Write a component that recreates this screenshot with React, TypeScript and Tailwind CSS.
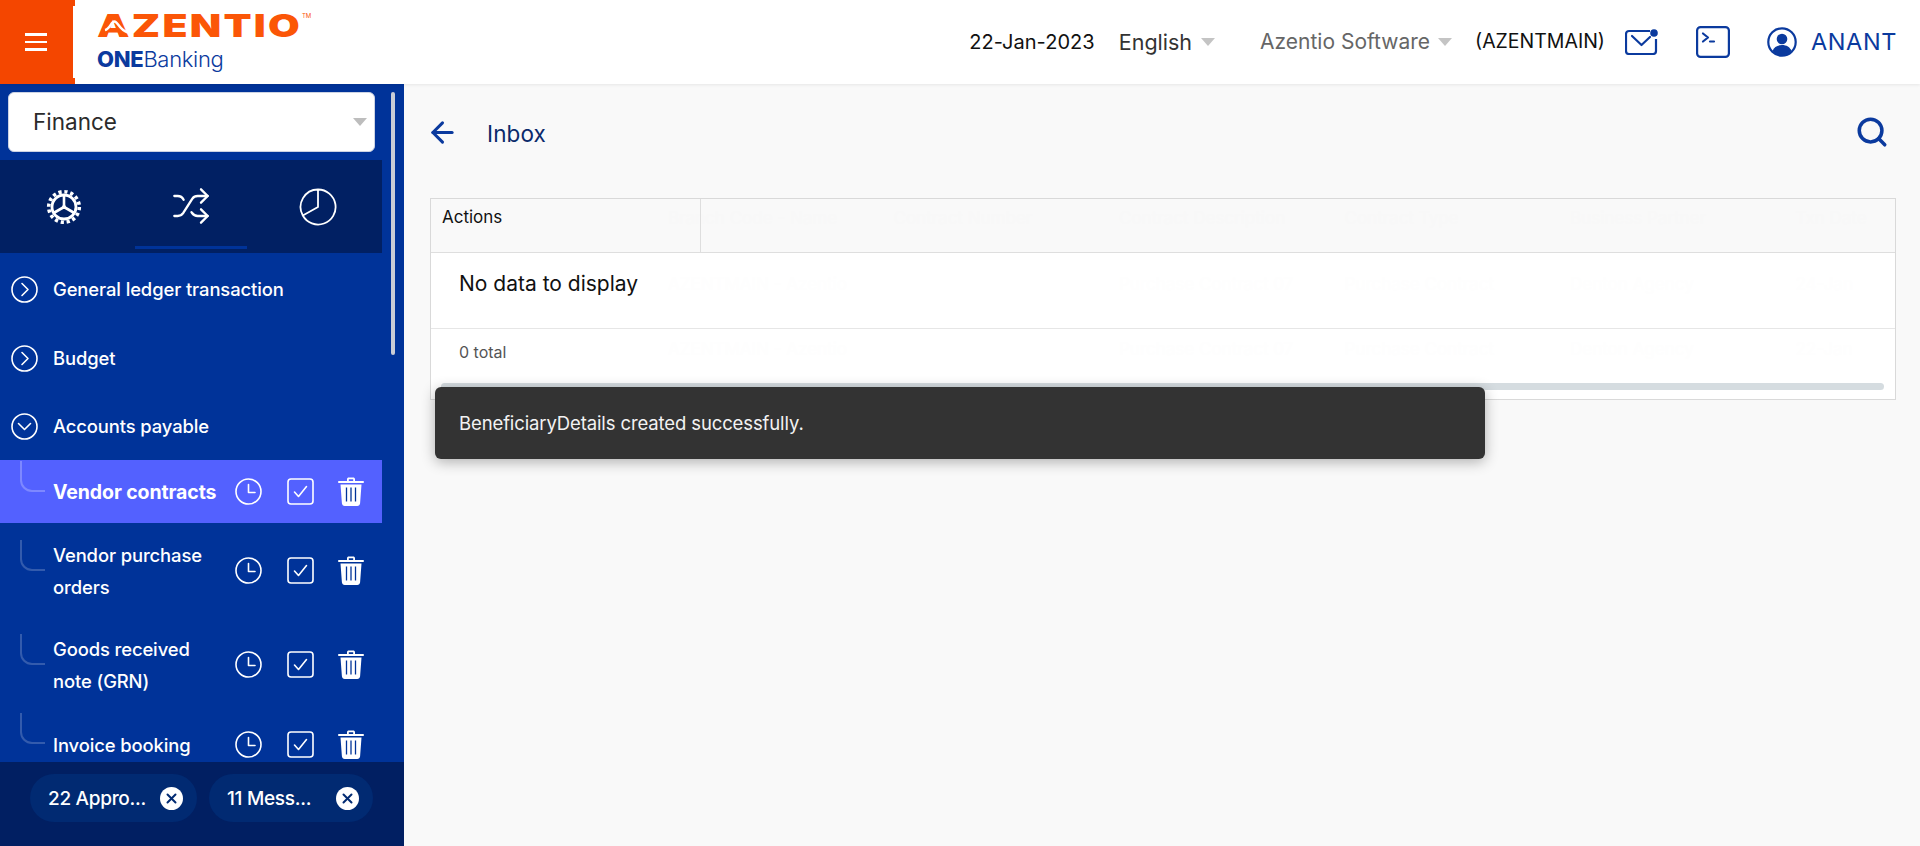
import React from "react";
import { ArrowLeft, Search, Shuffle } from "lucide-react";

function Caret({ className }: { className: string }) {
  return (
    <svg width="14" height="8" viewBox="0 0 14 8" className={className}>
      <path d="M0 0h14L7 8z" fill="currentColor" />
    </svg>
  );
}

function ChevronCircle({ open }: { open?: boolean }) {
  return (
    <svg width="27" height="27" viewBox="0 0 27 27" fill="none" stroke="white" strokeWidth="1.6" className="shrink-0">
      <circle cx="13.5" cy="13.5" r="12.5" />
      <path d={open ? "M7.5 10.5l6 6 6-6" : "M11 7.5l6 6-6 6"} strokeLinecap="round" strokeLinejoin="round" />
    </svg>
  );
}

function ClockIcon() {
  return (
    <svg width="27" height="27" viewBox="0 0 27 27" fill="none" stroke="white" strokeWidth="1.6">
      <circle cx="13.5" cy="13.5" r="12.5" />
      <path d="M13.5 6.5v8h6.5" strokeLinecap="round" strokeLinejoin="round" />
    </svg>
  );
}

function CheckIcon() {
  return (
    <svg width="27" height="27" viewBox="0 0 27 27" fill="none" stroke="white" strokeWidth="1.6">
      <rect x="1" y="1" width="25" height="25" rx="3" />
      <path d="M7.5 14l4 4.5 8-10" strokeLinecap="round" strokeLinejoin="round" />
    </svg>
  );
}

function TrashIcon() {
  return (
    <svg width="26" height="29" viewBox="0 0 26 29">
      <path d="M9 4V2.2C9 1.2 9.8.5 10.8.5h4.4c1 0 1.8.7 1.8 1.7V4h8c.5 0 1 .5 1 1s-.5 1-1 1H1C.5 6 0 5.500 0 5s.5-1 1-1h8zm1.800 0h4.400V2.300h-4.400V4z" fill="white" />
      <path d="M2.500 7.500h21l-1.400 18.700c-.1 1.500-1.300 2.800-2.800 2.800H6.700c-1.500 0-2.700-1.300-2.800-2.800L2.500 7.500z" fill="white" />
      <path d="M8.500 10.500v14M13 10.500v14M17.500 10.500v14" stroke="#003399" strokeWidth="1.300" fill="none" />
    </svg>
  );
}

function RowIcons() {
  return (
    <div className="ml-auto flex w-[147px] shrink-0 items-center justify-between pr-[18px]">
      <ClockIcon />
      <CheckIcon />
      <TrashIcon />
    </div>
  );
}

function Group({ label, open, h }: { label: string; open?: boolean; h: string }) {
  return (
    <div className={`flex items-center gap-[15px] pl-[11px] ${h}`}>
      <ChevronCircle open={open} />
      <span className="text-[18.400px] font-medium tracking-[-0.1px] text-white">{label}</span>
    </div>
  );
}

function SubItem({ lines, h, active }: { lines: string[]; h: string; active?: boolean }) {
  return (
    <div className={`relative flex items-center pl-[53px] ${h} ${active ? "bg-[#5361ff]" : ""}`}>
      <div className={`absolute left-[20px] top-1/2 h-[31px] w-[25px] -translate-y-full rounded-bl-[12px] border-b-2 border-l-2 ${active ? "border-white/25" : "border-white/20"}`} />
      <div className={`pt-[1px] leading-[32px] text-white ${active ? "text-[19.500px] font-bold tracking-[-0.1px]" : "text-[18.400px] font-medium tracking-[-0.1px]"}`}>
        {lines.map((l) => (
          <div key={l} className="whitespace-nowrap">{l}</div>
        ))}
      </div>
      <RowIcons />
    </div>
  );
}

function Pill({ text, w }: { text: string; w: string }) {
  return (
    <div className={`flex h-[48px] items-center justify-between rounded-full bg-[#012a72] pl-[18px] pr-[14px] ${w}`}>
      <span className="pt-[2px] text-[19px] font-medium tracking-[-0.3px] text-white">{text}</span>
      <svg width="23" height="23" viewBox="0 0 23 23">
        <circle cx="11.500" cy="11.500" r="11.500" fill="white" />
        <path d="M7.500 7.500l8 8M15.500 7.500l-8 8" stroke="#012a72" strokeWidth="2" strokeLinecap="round" />
      </svg>
    </div>
  );
}

function GhostCols({ cells, className }: { cells: string[]; className: string }) {
  return (
    <div className={`pointer-events-none absolute left-[237px] flex text-[17px] ${className}`}>
      {cells.map((c, i) => (
        <span key={i} className="w-[225.500px] whitespace-nowrap">{c}</span>
      ))}
    </div>
  );
}

function Header() {
  return (
    <header className="relative z-10 flex h-[84px] shrink-0 items-center bg-white pr-[23px] shadow-[0_1px_3px_rgba(0,0,0,0.08)]">
      <div className="relative flex h-full w-[75px] shrink-0 items-center justify-center bg-[#f44600] pr-[4px]">
        <div className="absolute right-0 top-[6px] h-[72px] w-[2px] bg-white" />
        <div className="flex w-[22px] flex-col gap-[5px]">
          <div className="h-[2.500px] bg-white" />
          <div className="h-[2.500px] bg-white" />
          <div className="h-[2.500px] bg-white" />
        </div>
      </div>
      <div className="ml-[22px] mt-[8px] flex flex-col self-start">
        <div className="relative flex h-[34px] items-center">
          <span className="origin-left scale-x-[1.32] text-[31px] font-black leading-none tracking-[1.700px] text-[#fb5607]">AZENTIO</span>
          <svg width="34" height="34" viewBox="0 0 34 34" fill="none" className="absolute left-0 top-0">
            <path d="M8 22C13 21 14 13.500 17.500 13.500S22 22 31 24.500" stroke="white" strokeWidth="2.400" />
          </svg>
          <span className="absolute left-[205px] top-[3px] text-[6px] text-[#fb5607]">TM</span>
        </div>
        <div className="mt-[4px] text-[22px] font-light leading-[26px] tracking-[-0.3px] text-[#0b3a9e]">
          <span className="font-extrabold">ONE</span>Banking
        </div>
      </div>
      <div className="ml-auto flex items-center">
        <span className="mr-[24px] text-[20px] tracking-[0.05px] text-[#111]">22-Jan-2023</span>
        <span className="mr-[9px] text-[21.500px] text-[#333]">English</span>
        <Caret className="mr-[45px] text-[#c4c4c4]" />
        <span className="mr-[8px] text-[21px] text-[#666]">Azentio Software</span>
        <Caret className="mr-[23px] text-[#c4c4c4]" />
        <span className="mr-[20px] text-[19.500px] text-[#111]">(AZENTMAIN)</span>
        <svg width="33" height="26" viewBox="0 0 33 26" fill="none" stroke="#0b3a9e" strokeWidth="2.200" className="mr-[38px]">
          <path d="M25 2H4a3 3 0 0 0-3 3v17a3 3 0 0 0 3 3h24a3 3 0 0 0 3-3V10" />
          <path d="M7 7l9.500 9L25 8" strokeLinecap="round" strokeLinejoin="round" />
          <circle cx="29" cy="4" r="3.800" fill="#0b3a9e" stroke="none" />
        </svg>
        <svg width="34" height="32" viewBox="0 0 34 32" fill="none" stroke="#0b3a9e" strokeWidth="2.200" className="mr-[37px]">
          <rect x="1.100" y="1.100" width="31.800" height="29.800" rx="3.500" />
          <path d="M7 7.500l5 4-5 4M14 15.500h4" strokeLinecap="round" strokeLinejoin="round" />
        </svg>
        <svg width="30" height="30" viewBox="0 0 30 30" className="mr-[14px]">
          <circle cx="15" cy="15" r="13.700" fill="none" stroke="#0b3a9e" strokeWidth="2.200" />
          <circle cx="15" cy="12" r="5.300" fill="#0b3a9e" />
          <path d="M5.500 24c1.500-4 5-6 9.500-6s8 2 9.500 6c-2.500 2.800-5.800 4.500-9.500 4.500S8 26.800 5.500 24z" fill="#0b3a9e" />
        </svg>
        <span className="text-[23.500px] tracking-[0.6px] text-[#0b3a9e]">ANANT</span>
      </div>
    </header>
  );
}

function Sidebar() {
  return (
    <aside className="relative flex h-full w-[404px] shrink-0 flex-col bg-[#003399]">
      <div className="absolute right-[9px] top-[8px] h-[263px] w-[4px] rounded-full bg-[#c9cdd6]" />
      <div className="px-[8px] pb-[8px] pr-[29px] pt-[8px]">
        <div className="flex h-[60px] items-center justify-between rounded-[6px] border border-[#ccd3e3] bg-white pl-[24px] pr-[7px]">
          <span className="text-[22.500px] text-[#2b2b2b]">Finance</span>
          <Caret className="text-[#bdbdbd]" />
        </div>
      </div>
      <div className="mr-[22px] flex h-[93px] shrink-0 items-start bg-[#012063] pl-[46px]">
        <div className="mt-[29px] w-[40px]">
          <svg width="36" height="36" viewBox="0 0 36 36" fill="none" stroke="white">
            <circle cx="18" cy="18" r="15.300" strokeWidth="3.600" strokeDasharray="3.200 2.800" />
            <circle cx="18" cy="18" r="12" strokeWidth="2.800" />
            <path d="M18 18V6M18 18L7.600 24M18 18l10.400 6" strokeWidth="2.600" />
            <circle cx="18" cy="18" r="2" fill="white" stroke="none" />
          </svg>
        </div>
        <div className="ml-[49px] flex h-full w-[112px] flex-col items-center">
          <Shuffle size={40} strokeWidth={1.400} className="mt-[26px] text-white" />
          <div className="mt-[20px] h-[3px] w-full bg-[#003399]" />
        </div>
        <svg width="38" height="38" viewBox="0 0 38 38" fill="none" stroke="white" strokeWidth="1.800" className="ml-[52px] mt-[28px]">
          <path d="M19 1.500A17.500 17.500 0 1 1 3.800 27.500L19 19V1.500zM3.800 27.500A17.500 17.500 0 0 1 19 1.500" strokeLinejoin="round" />
        </svg>
      </div>
      <div className="flex min-h-0 flex-1 flex-col overflow-hidden pr-[22px] pt-[2px]">
        <Group label="General ledger transaction" h="h-[69px] shrink-0" />
        <Group label="Budget" h="h-[69px] shrink-0" />
        <Group label="Accounts payable" open h="h-[67px] shrink-0" />
        <SubItem lines={["Vendor contracts"]} h="h-[63px] shrink-0" active />
        <SubItem lines={["Vendor purchase", "orders"]} h="h-[95px] shrink-0" />
        <SubItem lines={["Goods received", "note (GRN)"]} h="h-[93px] shrink-0" />
        <SubItem lines={["Invoice booking"]} h="h-[66px] shrink-0" />
      </div>
      <div className="flex h-[84px] shrink-0 items-start gap-[12px] bg-[#011f62] pl-[30px] pt-[12px]">
        <Pill text="22 Appro..." w="w-[167px]" />
        <Pill text="11 Mess..." w="w-[164px]" />
      </div>
    </aside>
  );
}

function Main() {
  return (
    <main className="relative min-w-0 flex-1 bg-[#f9f9f9] pl-[26px] pr-[24px]">
      <div className="flex h-[114px] items-start">
        <ArrowLeft size={33} strokeWidth={2.200} className="ml-[-4px] mt-[32px] text-[#0b3a9e]" />
        <span className="ml-[28px] mt-[33px] text-[22.500px] tracking-[0.1px] text-[#0b2a6b]">Inbox</span>
        <Search size={34} strokeWidth={2.500} className="ml-auto mr-[7px] mt-[31px] text-[#0b3a9e]" />
      </div>
      <div className="relative h-[202px] border border-[#d9d9d9] bg-white">
        <div className="relative flex h-[54px] border-b border-[#dedede] bg-[#f9f9f9]">
          <div className="z-[1] w-[270px] border-r border-[#dedede] pl-[11px] pt-[6px] text-[17px] text-[#111]">Actions</div>
          <GhostCols
            className="top-[7px] text-[#f8f8f8]"
            cells={["Branch Code - Name", "Contract Number", "Contract Description", "Contract Type", "Business Partner", "Txn Date"]}
          />
        </div>
        <div className="relative h-[76px] border-b border-[#e6e6e6] pl-[28px] pt-[16px] text-[21px] leading-[30px] text-[#111]">
          No data to display
          <GhostCols
            className="top-[16px] text-[#fefefe]"
            cells={["AZENTMAIN - Azentio", "", "Purchase Contract 07", "Purchase Contract", "Denton Agency", "24-Jan"]}
          />
        </div>
        <div className="relative pl-[28px] pt-[13px] text-[16px] leading-[20px] text-[#555]">
          0 total
          <GhostCols
            className="top-[10px] text-[#fefefe]"
            cells={["AZENTMAIN - Azentio", "", "Purchase Contract 07", "Purchase Contract", "Denton Agency", "22-Jan"]}
          />
        </div>
        <div className="absolute bottom-[9px] left-[10px] right-[11px] h-[7px] rounded-full bg-[#d5dce0]" />
      </div>
      <div className="absolute left-[31px] top-[303px] flex h-[72px] w-[1050px] items-center rounded-[6px] bg-[#333333] pl-[24px] pt-[1px] text-[18.500px] tracking-[-0.12px] text-[#f2f2f2] shadow-[0_3px_14px_rgba(0,0,0,0.3)]">
        BeneficiaryDetails created successfully.
      </div>
    </main>
  );
}

export default function App() {
  return (
    <div className="flex h-[846px] w-[1920px] flex-col overflow-hidden bg-white [font-family:Inter,sans-serif]">
      <Header />
      <div className="flex min-h-0 flex-1">
        <Sidebar />
        <Main />
      </div>
    </div>
  );
}
